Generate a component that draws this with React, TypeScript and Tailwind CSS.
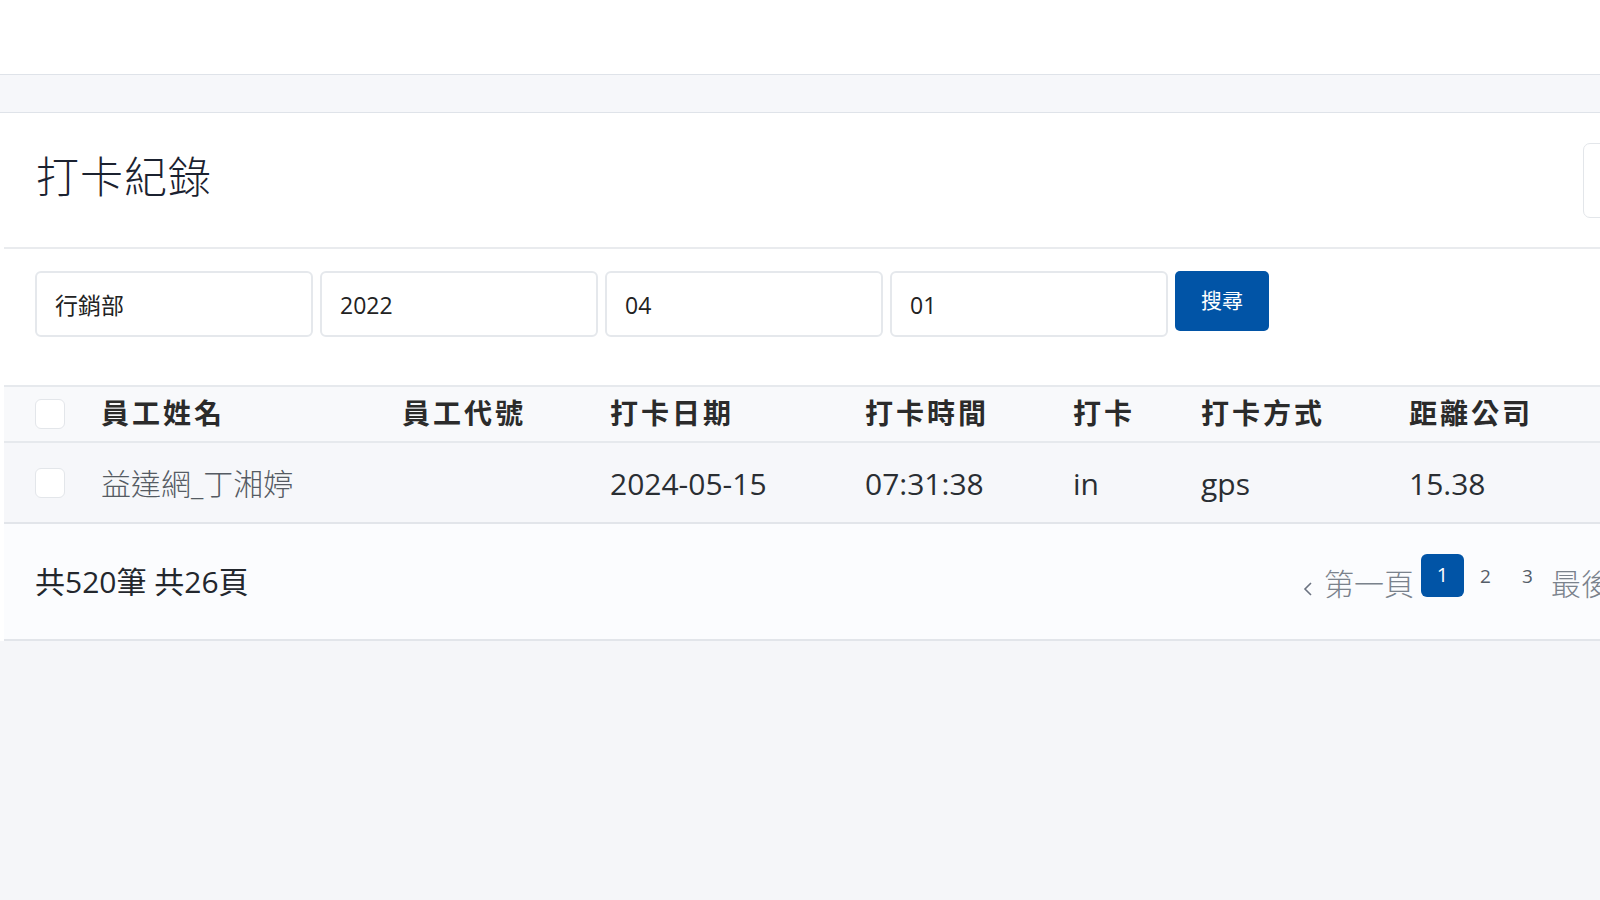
import React from "react";

const FONT = { fontFamily: '"Open Sans", "Noto Sans CJK TC", "Noto Sans", sans-serif' };

const cols = "grid grid-cols-[66px_301px_208px_255px_208px_128px_208px_300px] items-center pl-[31px]";

function Box() {
  return <div className="w-[30px] h-[30px] rounded-[6px] border border-[#e3e6ea] bg-white" />;
}

export default function App() {
  return (
    <div className="w-[1600px] h-[900px] overflow-hidden bg-[#f5f6f9]" style={FONT}>
      <div className="h-[75px] bg-white border-b border-[#dfe3e9]" />
      <div className="h-[38px] bg-[#f6f7fa] border-b border-[#dfe3e9]" />
      <div className="w-[1760px] bg-white">
        <div className="h-[134px] flex items-center justify-between pl-[36px] pr-[28px]">
          <h1 className="text-[43px] font-light tracking-[1px] text-[#1b2230] leading-none -mt-[8px]">打卡紀錄</h1>
          <div className="w-[149px] h-[75px] rounded-[7px] border border-[#e3e6ea] bg-white" />
        </div>
        <div className="ml-[4px] border-t-2 border-[#e9ebee]" />
        <div className="flex items-start gap-[7px] pl-[35px] pt-[22px] pb-[48px]">
          {["行銷部", "2022", "04", "01"].map((v) => (
            <div
              key={v}
              className="w-[278px] h-[66px] rounded-[6px] border-2 border-[#e5e8ec] bg-white flex items-center pl-[18px] text-[23px] text-[#222] pt-[2px]"
            >
              {v}
            </div>
          ))}
          <button className="w-[94px] h-[60px] rounded-[5px] bg-[#0154a6] text-white text-[21px] flex items-center justify-center">
            搜尋
          </button>
        </div>
        <div className="ml-[4px] bg-[#f8f9fb] border-t-2 border-b-2 border-[#e6e9ed]">
          <div className={cols + " h-[54px]"}>
            <Box />
            {["員工姓名", "員工代號", "打卡日期", "打卡時間", "打卡", "打卡方式", "距離公司"].map((h) => (
              <div key={h} className="text-[28px] font-bold tracking-[3px] text-[#2b2b2b] leading-none -mt-[3px]">
                {h}
              </div>
            ))}
          </div>
        </div>
        <div className="ml-[4px] bg-[#f6f7fa] border-b-2 border-[#e2e5ea]">
          <div className={cols + " h-[79px] text-[30px] leading-none"}>
            <Box />
            <div className="text-[#555b63] font-light pt-[3px]">益達網_丁湘婷</div>
            <div />
            <div className="text-[#2a2e33] pt-[3px]">2024-05-15</div>
            <div className="text-[#2a2e33] pt-[3px]">07:31:38</div>
            <div className="text-[#2a2e33] pt-[3px]">in</div>
            <div className="text-[#2a2e33] pt-[3px]">gps</div>
            <div className="text-[#2a2e33] pt-[3px]">15.38</div>
          </div>
        </div>
        <div className="ml-[4px] h-[117px] bg-[#fbfcfe] border-b-2 border-[#e2e5ea] flex items-center justify-between pl-[31px] pr-[65px]">
          <div className="text-[30px] text-[#23272d] leading-none">共520筆 共26頁</div>
          <div className="flex items-center text-[#7a828c]">
            <svg width="12" height="16" viewBox="0 0 12 16" className="mt-[14px] mr-[10px]">
              <polyline points="9,2 3,8 9,14" fill="none" stroke="#6b7280" strokeWidth="1.6" />
            </svg>
            <span className="text-[30px] font-light leading-none mt-[4px]">第一頁</span>
            <span className="ml-[7px] w-[43px] h-[43px] rounded-[6px] bg-[#0154a6] text-white text-[20px] flex items-center justify-center -mt-[13px]">
              1
            </span>
            <span className="ml-[16px] w-[12px] text-[19px] text-[#555d68] -mt-[10px]">2</span>
            <span className="ml-[30px] w-[12px] text-[19px] text-[#555d68] -mt-[10px]">3</span>
            <span className="ml-[17px] text-[30px] font-light leading-none mt-[4px]">最後一頁</span>
            <svg width="12" height="16" viewBox="0 0 12 16" className="mt-[14px] ml-[12px]">
              <polyline points="3,2 9,8 3,14" fill="none" stroke="#6b7280" strokeWidth="1.6" />
            </svg>
          </div>
        </div>
      </div>
    </div>
  );
}
